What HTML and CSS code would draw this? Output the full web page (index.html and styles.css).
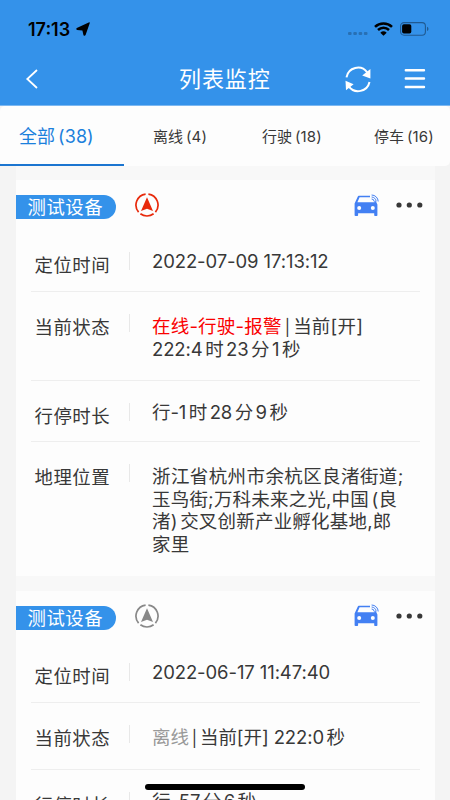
FILE: index.html
```
<!DOCTYPE html>
<html lang="zh-CN">
<head>
<meta charset="utf-8">
<meta name="viewport" content="width=device-width">
<title>列表监控</title>
<link rel="stylesheet" href="styles.css">
</head>
<body>
<svg class="defs" aria-hidden="true">
  <symbol id="compass" viewBox="0 0 24 24">
    <path d="M10.6 1.1A11 11 0 0 0 3.6 19.1M13.4 1.1A11 11 0 0 1 20.4 19.1M5.4 20.8A11 11 0 0 0 18.6 20.8" fill="none" stroke="currentColor" stroke-width="1.7"/>
    <path d="M12 4.2 18 18 12 15.7 6 18Z" fill="currentColor"/>
  </symbol>
  <symbol id="car" viewBox="0 0 25 23">
    <path fill-rule="evenodd" d="M4.8 1.8H16V3.2H5.6L3.4 8.3H20.6L20 7.2H21.9L23.4 10.4V21.3Q23.4 22.1 22.6 22.1H21Q20.2 22.1 20.2 21.3V19.2H4.1V21.3Q4.1 22.1 3.3 22.1H1.5Q.6 22.1.6 21.3V9.4L3.7 2.8Q4.1 1.8 4.8 1.8ZM5.2 12.1a2 2 0 1 0 0 4 2 2 0 0 0 0-4ZM18.8 12.1a2 2 0 1 0 0 4 2 2 0 0 0 0-4Z" fill="currentColor"/>
    <path d="M17.6 1A6.6 6.6 0 0 1 24.2 7.5M17.6 3A4.5 4.5 0 0 1 22.1 7.5M17.6 5A2.5 2.5 0 0 1 20.1 7.4" fill="none" stroke="currentColor" stroke-width="1"/>
  </symbol>
  <symbol id="more" viewBox="0 0 28 6">
    <g fill="currentColor"><circle cx="3" cy="3" r="2.6"/><circle cx="13.3" cy="3" r="2.6"/><circle cx="23.8" cy="3" r="2.6"/></g>
  </symbol>
</svg>
<div class="screen">
  <header class="header">
    <div class="status">
      <span class="clock">17:13</span>
      <svg class="locate" viewBox="0 0 14 14"><path d="M12.7.4Q14.2-.1 13.7 1.3L9.6 13Q8.8 14.5 7.5 13.3L6.4 8.4 1 7.9Q-.6 7 .8 5.9Z"/></svg>
      <svg class="signal" viewBox="0 0 20 4"><g fill="#2870b4"><rect width="3.6" height="3" rx="1"/><rect x="5.3" width="3.6" height="3" rx="1"/><rect x="10.6" width="3.6" height="3" rx="1"/><rect x="15.9" width="3.6" height="3" rx="1"/></g></svg>
      <svg class="wifi" viewBox="0 0 19 14"><path d="M1 4.9A12.3 12.3 0 0 1 18 4.9M4 8A8 8 0 0 1 15 8" fill="none" stroke="#000" stroke-width="2.5"/><path d="M6.3 10.7Q9.5 8 12.7 10.7L9.5 13.8Z"/></svg>
      <svg class="battery" viewBox="0 0 29 14"><rect x=".6" y=".6" width="24.8" height="12.6" rx="3.4" fill="none" stroke="#205a91" stroke-width="1.1"/><rect x="2.1" y="2.2" width="9.2" height="9.4" rx="1.8"/><path d="M27 4.7Q28.5 5.3 28.5 6.9T27 9.1Z" fill="#205a91"/></svg>
    </div>
    <div class="nav">
      <svg class="back" viewBox="0 0 12 20"><path d="M11 1 1.3 10 11 19" fill="none" stroke="#fff" stroke-width="1.8"/></svg>
      <h1 class="title">列表监控</h1>
      <svg class="refresh" viewBox="0 0 26 26"><g fill="none" stroke="#fff" stroke-width="2"><path d="M1.5 11.3A11.6 11.6 0 0 1 22.2 6.3"/><path d="M24.5 16A11.6 11.6 0 0 1 3.8 20.4"/></g><path d="M25.4 3.1V12.4L17.2 9.6ZM.5 14.8 8.6 18.3 1 24.2Z" fill="#fff"/></svg>
      <svg class="menu" viewBox="0 0 22 22"><path d="M1.8 2.3H20M1.8 10.5H20M1.8 19H20" stroke="#fff" stroke-width="2.4" stroke-linecap="round"/></svg>
    </div>
  </header>
  <nav class="tabs">
    <div class="tab active">全部<span class="count">(38)</span></div>
    <div class="tab t2">离线<span class="count">(4)</span></div>
    <div class="tab t3">行驶<span class="count">(18)</span></div>
    <div class="tab t4">停车<span class="count">(16)</span></div>
  </nav>
  <main class="list">
    <section class="card">
      <div class="head"><span class="name">测试设备</span><svg class="compass on"><use href="#compass"/></svg><svg class="car"><use href="#car"/></svg><svg class="more"><use href="#more"/></svg></div>
      <div class="row"><div class="label">定位时间</div><div class="value"><p class="num">2022-07-09 17:13:12</p></div></div>
      <div class="row two"><div class="label">当前状态</div><div class="value"><p><span class="alarm">在线-行驶-报警</span><span class="bar">|</span>当前[开]</p><p class="num">222:4<span class="gap">时</span><span class="gap">23</span><span class="gap">分</span><span class="gap">1</span><span class="gap">秒</span></p></div></div>
      <div class="row"><div class="label">行停时长</div><div class="value"><p class="num">行-1<span class="gap">时</span><span class="gap">28</span><span class="gap">分</span><span class="gap">9</span><span class="gap">秒</span></p></div></div>
      <div class="row four"><div class="label">地理位置</div><div class="value"><p class="wide">浙江省杭州市余杭区良渚街道;</p><p>玉鸟街;万科未来之光,中国<span class="gap">(良</span></p><p>渚)<span class="gap">交叉创新产业孵化基地,郎</span></p><p>家里</p></div></div>
    </section>
    <section class="card">
      <div class="head"><span class="name">测试设备</span><svg class="compass"><use href="#compass"/></svg><svg class="car"><use href="#car"/></svg><svg class="more"><use href="#more"/></svg></div>
      <div class="row"><div class="label">定位时间</div><div class="value"><p class="num">2022-06-17 11:47:40</p></div></div>
      <div class="row one"><div class="label">当前状态</div><div class="value"><p class="num"><span class="offline">离线</span><span class="bar">|</span>当前[开] 222:0<span class="gap">秒</span></p></div></div>
      <div class="row"><div class="label">行停时长</div><div class="value"><p class="num">行-57<span class="gap">分</span><span class="gap">6</span><span class="gap">秒</span></p></div></div>
    </section>
  </main>
  <div class="home"></div>
</div>
</body>
</html>
```
FILE: styles.css
```
* { box-sizing: border-box; }
body { margin: 0; font-family: Inter, "Noto Sans CJK SC", sans-serif; color: #383838; }
p, h1 { margin: 0; font-weight: 400; }
svg { display: block; flex: none; overflow: visible; }
.defs { position: absolute; width: 0; height: 0; }
.screen { position: relative; width: 450px; height: 800px; overflow: hidden; background: #f4f4f4; }

.header { height: 106px; background: #3492ea; border-bottom: 1px solid #7db8f1; }
.status { display: flex; align-items: center; height: 58px; padding-left: 28px; }
.clock { width: 48px; padding-top: 1px; font-size: 18px; font-weight: 600; color: #000; letter-spacing: 0; line-height: 20px; }
.locate { width: 14px; height: 14px; }
.signal { width: 20px; height: 4px; margin: 9px 0 0 258px; }
.wifi { width: 19px; height: 14px; margin-left: 6px; }
.battery { width: 29px; height: 14px; margin-left: 7px; }
.nav { display: flex; align-items: center; height: 42px; padding-left: 26px; }
.back { width: 12px; height: 20px; }
.title { width: 96px; margin-left: 141px; font-size: 22px; letter-spacing: .9px; line-height: 30px; color: #fff; white-space: nowrap; }
.refresh { width: 26px; height: 26px; margin-left: 70px; }
.menu { width: 22px; height: 22px; margin-left: 33px; }

.tabs { display: grid; grid-template-columns: 124px 112px 112px 102px; height: 60px; background: #fdfdfd; border-radius: 5px; }
.tab { padding-top: 20px; font-size: 15px; line-height: 22px; white-space: nowrap; }
.tab .count { margin-left: 3px; letter-spacing: .1px; }
.active { padding: 19px 0 0 19px; font-size: 18px; line-height: 24px; color: #1b80dc; border-bottom: 2px solid #1b75d0; height: 60px; }
.t2 { padding-left: 29px; }
.t3 { padding-left: 26px; }
.t4 { padding-left: 26px; }

.list { display: flex; flex-direction: column; gap: 15px; width: 419px; margin-left: 16px; padding-top: 14px; background: #f8f8f8; }
.card { background: #fdfdfd; }
.head { display: flex; align-items: center; height: 50px; }
.name { width: 100px; height: 24px; margin-top: 4px; padding-left: 11.5px; border-radius: 0 12px 12px 0; background: #3492ea; color: #fff; font-size: 18.4px; letter-spacing: .5px; line-height: 24px; white-space: nowrap; }
.compass { width: 24px; height: 24px; margin-left: 19px; color: #888; }
.compass.on { color: #e8290b; }
.car { width: 25px; height: 23px; margin-left: 195px; color: #4380f3; }
.more { width: 28px; height: 6px; margin-left: 17px; color: #383838; }
.row { display: grid; grid-template-columns: 99px 1fr; margin: 0 15px; height: 61.7px; border-bottom: 1px solid #eee; }
.row.one { height: 67px; }
.row.two { height: 89px; }
.row.four { height: 133.6px; }
.row:last-child { border-bottom: 0; }
.label { height: 18px; margin-top: 22px; padding-left: 3.5px; border-right: 1px solid #e8e8e8; font-size: 18.4px; letter-spacing: .5px; line-height: 26px; white-space: nowrap; }
.value { padding: 20px 0 0 22px; font-size: 18.5px; letter-spacing: .2px; line-height: 22.4px; white-space: nowrap; }
.one .value, .two .value, .four .value { padding-top: 23px; }
.num { letter-spacing: -.1px; }
.wide { letter-spacing: .4px; }
.gap { margin-left: 2.5px; }
.bar { margin: 0 3px; font-size: 16px; }
.alarm { color: #fa0000; }
.offline { color: #999; }
.home { position: absolute; left: 145px; bottom: 10px; width: 160px; height: 6px; border-radius: 3px; background: #000; }
```
